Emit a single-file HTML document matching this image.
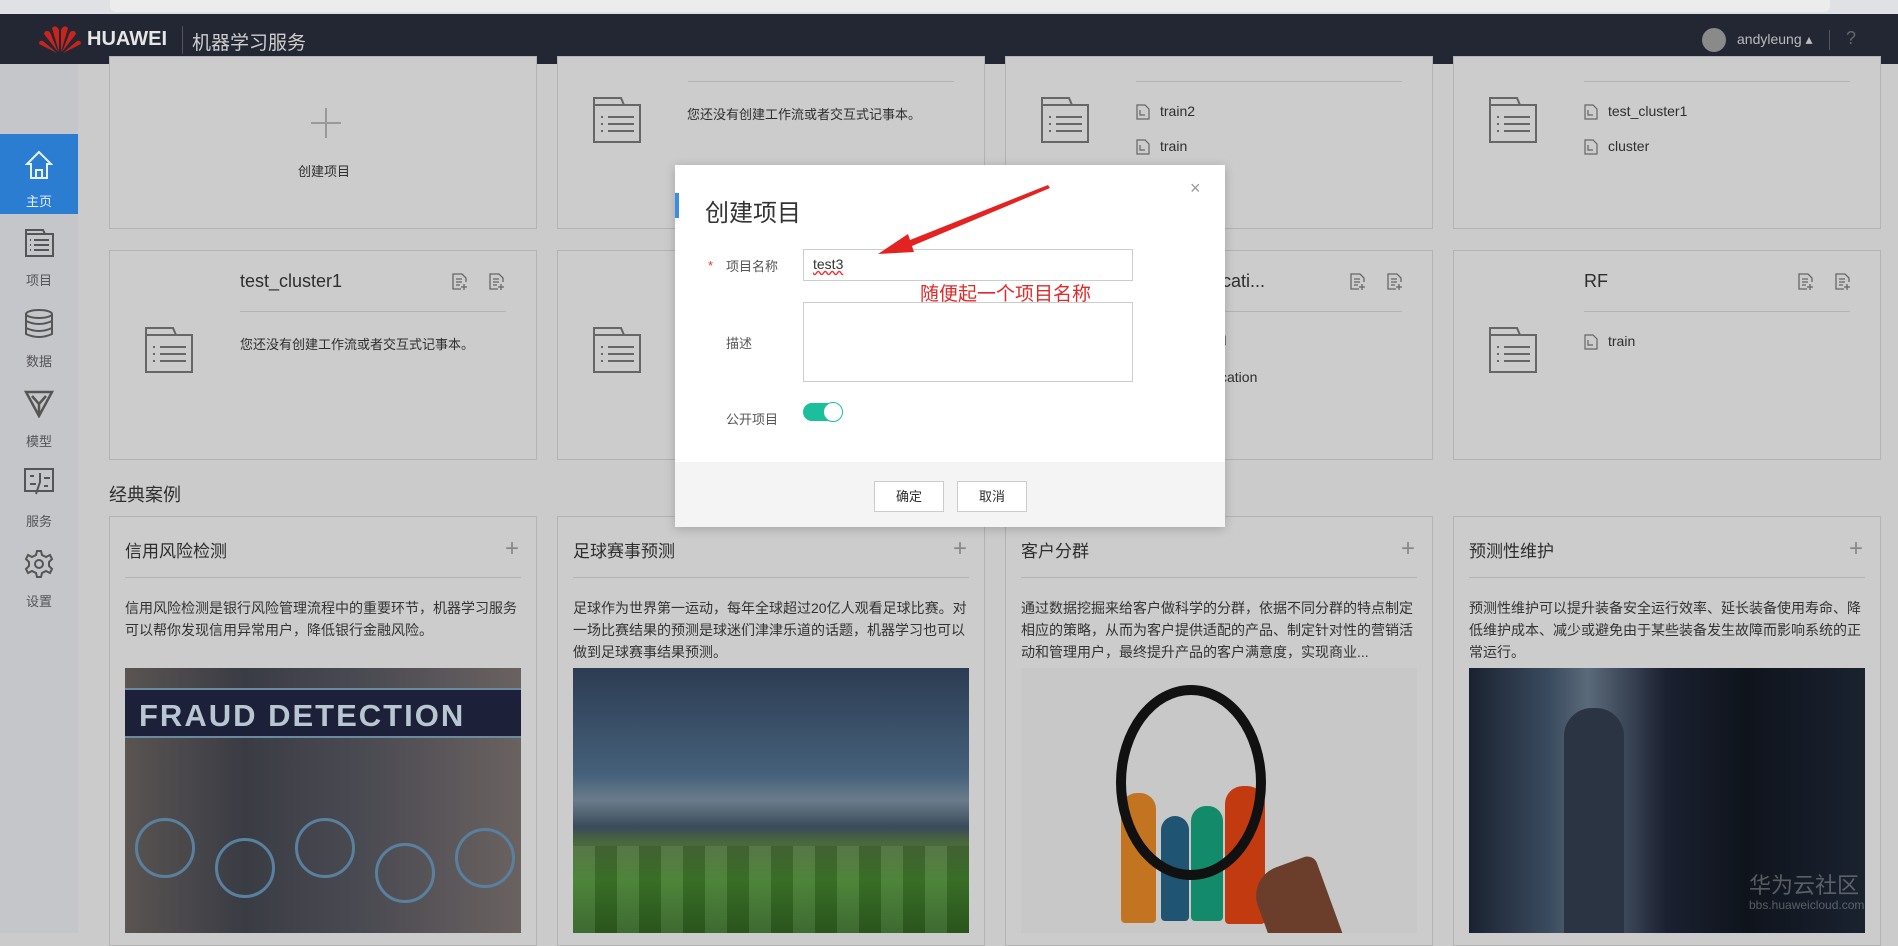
<!DOCTYPE html>
<html><head><meta charset="utf-8"><style>
*{margin:0;padding:0;box-sizing:border-box}
body{width:1898px;height:933px;overflow:hidden;position:relative;background:#cbcbcb;font-family:"Liberation Sans","Noto Sans CJK SC",sans-serif;color:#2e2e2e}
.abs{position:absolute}
.card{position:absolute;background:#cccccc;border:1px solid #b3b3b3}
.ln{position:absolute;height:1px;background:#b3b3b3}
.t{position:absolute;white-space:nowrap}
.side{position:absolute;left:0;top:64px;width:78px;height:869px;background:#c5c6ca}
.si{position:absolute;left:0;width:78px;text-align:center;font-size:13px;color:#555}
.desc{position:absolute;width:400px;font-size:14px;line-height:22px;color:#333}
</style></head><body>
<div class="abs" style="left:0;top:0;width:1898px;height:14px;background:#dfe1e4"></div>
<div class="abs" style="left:110px;top:0;width:1720px;height:12px;background:#ececec;border-radius:0 0 6px 6px"></div>
<div class="abs" style="left:0;top:14px;width:1898px;height:50px;background:#232633"></div>
<svg class="abs" style="left:38px;top:24px" width="44" height="30" viewBox="0 0 44 30">
<g fill="#c8241c"><path d="M21 28 L14 4 Q18 0 21 6Z"/><path d="M23 28 L30 4 Q26 0 23 6Z"/><path d="M20 28 L6 10 Q7 5 12 8Z"/><path d="M24 28 L38 10 Q37 5 32 8Z"/><path d="M19 29 L1 20 Q1 16 5 17Z"/><path d="M25 29 L43 20 Q43 16 39 17Z"/></g></svg>
<div class="t" style="left:87px;top:28px;font-size:20px;font-weight:bold;color:#e6e6e6">HUAWEI</div>
<div class="abs" style="left:182px;top:26px;width:1px;height:28px;background:#555"></div>
<div class="t" style="left:192px;top:28px;font-size:19px;color:#cfcfcf">机器学习服务</div>
<div class="abs" style="left:1702px;top:28px;width:24px;height:24px;border-radius:50%;background:#8a8a8a"></div>
<div class="t" style="left:1737px;top:31px;font-size:14px;color:#bbb">andyleung ▴</div>
<div class="abs" style="left:1829px;top:30px;width:1px;height:20px;background:#555"></div>
<div class="t" style="left:1846px;top:28px;font-size:18px;color:#666">?</div>
<div class="side"></div>
<div class="abs" style="left:0;top:134px;width:78px;height:80px;background:#2a7dd0"></div>
<svg class="abs" style="left:25px;top:150px" width="28" height="30" viewBox="0 0 28 30" fill="none" stroke="#e8f0fa" stroke-width="2"><path d="M14 2 L2 14 H6 V28 H22 V14 H26Z"/><path d="M11 28 V20 H17 V28"/></svg>
<div class="si" style="top:191px;color:#e8f0fa">主页</div>
<svg class="abs" style="left:25px;top:229px" width="29" height="28" viewBox="0 0 29 28" fill="none" stroke="#555" stroke-width="2"><path d="M1 1 H18 L20 5 H28 V27 H1Z M1 5 H20"/><path d="M9 11H24M9 16H24M9 21H24M5 11H6M5 16H6M5 21H6"/></svg>
<div class="si" style="top:270px">项目</div>
<svg class="abs" style="left:24px;top:309px" width="30" height="30" viewBox="0 0 30 30" fill="none" stroke="#555" stroke-width="2"><ellipse cx="15" cy="5" rx="13" ry="4"/><path d="M2 5V25Q15 31 28 25V5M2 12Q15 18 28 12M2 19Q15 25 28 19"/></svg>
<div class="si" style="top:351px">数据</div>
<svg class="abs" style="left:24px;top:390px" width="30" height="28" viewBox="0 0 30 28" fill="none" stroke="#555" stroke-width="2.5"><path d="M2 2H28L15 26Z M15 26 V14 M8 6 L15 14 L22 6"/></svg>
<div class="si" style="top:431px">模型</div>
<svg class="abs" style="left:24px;top:468px" width="30" height="28" viewBox="0 0 30 28" fill="none" stroke="#555" stroke-width="2"><rect x="1" y="1" width="28" height="22"/><path d="M6 8H10M6 16H12M16 5V14L12 26M20 10H26M20 18H24"/></svg>
<div class="si" style="top:511px">服务</div>
<svg class="abs" style="left:24px;top:549px" width="30" height="30" viewBox="0 0 30 30" fill="none" stroke="#555" stroke-width="2"><circle cx="15" cy="15" r="4"/><path d="M13 2H17L18 6L22 8L26 6L28 10L25 13V17L28 20L26 24L22 22L18 24L17 28H13L12 24L8 22L4 24L2 20L5 17V13L2 10L4 6L8 8L12 6Z"/></svg>
<div class="si" style="top:591px">设置</div>

<div class="card" style="left:109px;top:56px;width:428px;height:173px"></div>
<div class="abs" style="left:311px;top:108px;width:30px;height:30px"><div class="abs" style="left:14px;top:0;width:2px;height:30px;background:#9a9a9a"></div><div class="abs" style="left:0;top:14px;width:30px;height:2px;background:#9a9a9a"></div></div>
<div class="t" style="left:298px;top:161px;font-size:13px">创建项目</div>
<div class="card" style="left:557px;top:56px;width:428px;height:173px"></div>
<div class="card" style="left:1005px;top:56px;width:428px;height:173px"></div>
<div class="card" style="left:1453px;top:56px;width:428px;height:173px"></div>

<div class="card" style="left:109px;top:250px;width:428px;height:210px"></div>
<div class="card" style="left:557px;top:250px;width:428px;height:210px"></div>
<div class="card" style="left:1005px;top:250px;width:428px;height:210px"></div>
<div class="card" style="left:1453px;top:250px;width:428px;height:210px"></div>

<svg width="0" height="0" style="position:absolute"><defs>
<symbol id="fold" viewBox="0 0 48 46"><g fill="none" stroke="#666" stroke-width="2"><path d="M1 1H28L31 8H47V45H1Z M1 8H31"/><path d="M15 20H41M15 27H41M15 34H41"/><path d="M8 20H10M8 27H10M8 34H10"/></g></symbol>
<symbol id="fi" viewBox="0 0 14 16"><g fill="none" stroke="#666" stroke-width="1.2"><path d="M1 1H9L13 5V15H1Z"/><path d="M4 6V11H9"/></g></symbol>
<symbol id="adds" viewBox="0 0 16 18"><g fill="none" stroke="#666" stroke-width="1.3"><path d="M9 16H1V1H10L14 5V9"/><path d="M4 6H10M4 9H10M4 12H8M12 11V17M9 14H15"/></g></symbol>
</defs></svg>

<div class="ln" style="left:688px;top:81px;width:266px"></div>
<svg class="abs" style="left:593px;top:97px" width="48" height="46"><use href="#fold"/></svg>
<div class="t" style="left:687px;top:104px;font-size:13px">您还没有创建工作流或者交互式记事本。</div>
<div class="ln" style="left:1136px;top:81px;width:266px"></div>
<svg class="abs" style="left:1041px;top:97px" width="48" height="46"><use href="#fold"/></svg>
<svg class="abs" style="left:1136px;top:104px" width="14" height="16"><use href="#fi"/></svg>
<div class="t" style="left:1160px;top:103px;font-size:14px">train2</div>
<svg class="abs" style="left:1136px;top:139px" width="14" height="16"><use href="#fi"/></svg>
<div class="t" style="left:1160px;top:138px;font-size:14px">train</div>
<div class="ln" style="left:1584px;top:81px;width:266px"></div>
<svg class="abs" style="left:1489px;top:97px" width="48" height="46"><use href="#fold"/></svg>
<svg class="abs" style="left:1584px;top:104px" width="14" height="16"><use href="#fi"/></svg>
<div class="t" style="left:1608px;top:103px;font-size:14px">test_cluster1</div>
<svg class="abs" style="left:1584px;top:139px" width="14" height="16"><use href="#fi"/></svg>
<div class="t" style="left:1608px;top:138px;font-size:14px">cluster</div>

<div class="t" style="left:240px;top:271px;font-size:18px">test_cluster1</div>
<svg class="abs" style="left:452px;top:273px" width="16" height="18"><use href="#adds"/></svg>
<svg class="abs" style="left:489px;top:273px" width="16" height="18"><use href="#adds"/></svg>
<div class="ln" style="left:240px;top:311px;width:266px"></div>
<svg class="abs" style="left:145px;top:327px" width="48" height="46"><use href="#fold"/></svg>
<div class="t" style="left:240px;top:334px;font-size:13px">您还没有创建工作流或者交互式记事本。</div>
<svg class="abs" style="left:593px;top:327px" width="48" height="46"><use href="#fold"/></svg>
<div class="t" style="left:1213px;top:271px;font-size:18px">ficati...</div>
<svg class="abs" style="left:1350px;top:273px" width="16" height="18"><use href="#adds"/></svg>
<svg class="abs" style="left:1387px;top:273px" width="16" height="18"><use href="#adds"/></svg>
<div class="ln" style="left:1136px;top:311px;width:266px"></div>
<div class="t" style="left:1215px;top:332px;font-size:14px">M</div>
<div class="t" style="left:1213px;top:369px;font-size:14px">fication</div>
<div class="t" style="left:1584px;top:271px;font-size:18px">RF</div>
<svg class="abs" style="left:1798px;top:273px" width="16" height="18"><use href="#adds"/></svg>
<svg class="abs" style="left:1835px;top:273px" width="16" height="18"><use href="#adds"/></svg>
<div class="ln" style="left:1584px;top:311px;width:266px"></div>
<svg class="abs" style="left:1489px;top:327px" width="48" height="46"><use href="#fold"/></svg>
<svg class="abs" style="left:1584px;top:334px" width="14" height="16"><use href="#fi"/></svg>
<div class="t" style="left:1608px;top:333px;font-size:14px">train</div>

<div class="t" style="left:109px;top:481px;font-size:18px">经典案例</div>

<div class="card" style="left:109px;top:516px;width:428px;height:430px"></div>
<div class="card" style="left:557px;top:516px;width:428px;height:430px"></div>
<div class="card" style="left:1005px;top:516px;width:428px;height:430px"></div>
<div class="card" style="left:1453px;top:516px;width:428px;height:430px"></div>

<div class="t" style="left:125px;top:537px;font-size:17px">信用风险检测</div>
<div class="t" style="left:505px;top:535px;font-size:24px;color:#888">+</div>
<div class="ln" style="left:125px;top:577px;width:396px"></div>
<div class="desc" style="left:125px;top:597px">信用风险检测是银行风险管理流程中的重要环节，机器学习服务可以帮你发现信用异常用户，降低银行金融风险。</div>

<div class="t" style="left:573px;top:537px;font-size:17px">足球赛事预测</div>
<div class="t" style="left:953px;top:535px;font-size:24px;color:#888">+</div>
<div class="ln" style="left:573px;top:577px;width:396px"></div>
<div class="desc" style="left:573px;top:597px">足球作为世界第一运动，每年全球超过20亿人观看足球比赛。对一场比赛结果的预测是球迷们津津乐道的话题，机器学习也可以做到足球赛事结果预测。</div>

<div class="t" style="left:1021px;top:537px;font-size:17px">客户分群</div>
<div class="t" style="left:1401px;top:535px;font-size:24px;color:#888">+</div>
<div class="ln" style="left:1021px;top:577px;width:396px"></div>
<div class="desc" style="left:1021px;top:597px">通过数据挖掘来给客户做科学的分群，依据不同分群的特点制定相应的策略，从而为客户提供适配的产品、制定针对性的营销活动和管理用户，最终提升产品的客户满意度，实现商业...</div>

<div class="t" style="left:1469px;top:537px;font-size:17px">预测性维护</div>
<div class="t" style="left:1849px;top:535px;font-size:24px;color:#888">+</div>
<div class="ln" style="left:1469px;top:577px;width:396px"></div>
<div class="desc" style="left:1469px;top:597px">预测性维护可以提升装备安全运行效率、延长装备使用寿命、降低维护成本、减少或避免由于某些装备发生故障而影响系统的正常运行。</div>

<div class="abs" style="left:125px;top:668px;width:396px;height:265px;background:linear-gradient(90deg,#5a5452,#3a3c44 30%,#4a4a52 60%,#6a6260);overflow:hidden">
 <div class="abs" style="left:0;top:20px;width:396px;height:50px;background:#1c2038;border-top:2px solid #6a8aa0;border-bottom:2px solid #6a8aa0"></div>
 <div class="t" style="left:14px;top:30px;font-size:31px;font-weight:bold;color:#b8c6d2;letter-spacing:2px">FRAUD DETECTION</div>
 <div class="abs" style="left:10px;top:150px;width:60px;height:60px;border-radius:50%;border:3px solid #5a80a0"></div>
 <div class="abs" style="left:90px;top:170px;width:60px;height:60px;border-radius:50%;border:3px solid #5a80a0"></div>
 <div class="abs" style="left:170px;top:150px;width:60px;height:60px;border-radius:50%;border:3px solid #5a80a0"></div>
 <div class="abs" style="left:250px;top:175px;width:60px;height:60px;border-radius:50%;border:3px solid #5a80a0"></div>
 <div class="abs" style="left:330px;top:160px;width:60px;height:60px;border-radius:50%;border:3px solid #5a80a0"></div>
</div>
<div class="abs" style="left:573px;top:668px;width:396px;height:265px;background:linear-gradient(180deg,#2c3c52 0%,#45607a 40%,#6a7c8a 50%,#3a4a5a 60%,#4a6a3a 66%,#3f7a2a 80%,#2e5e20 100%)">
 <div class="abs" style="left:0;top:178px;width:396px;height:87px;background:repeating-linear-gradient(90deg,rgba(255,255,255,.08) 0 22px,rgba(0,0,0,.1) 22px 44px)"></div>
</div>
<div class="abs" style="left:1021px;top:668px;width:396px;height:265px;background:#c8c8c8;overflow:hidden">
 <div class="abs" style="left:100px;top:125px;width:35px;height:130px;background:#c27420;border-radius:16px 16px 4px 4px"></div>
 <div class="abs" style="left:140px;top:148px;width:28px;height:105px;background:#1f5472;border-radius:14px 14px 4px 4px"></div>
 <div class="abs" style="left:170px;top:138px;width:32px;height:115px;background:#138a6a;border-radius:15px 15px 4px 4px"></div>
 <div class="abs" style="left:204px;top:118px;width:40px;height:138px;background:#c23a10;border-radius:18px 18px 4px 4px"></div>
 <div class="abs" style="left:95px;top:17px;width:150px;height:195px;border-radius:50%;border:10px solid #111"></div>
 <div class="abs" style="left:240px;top:195px;width:70px;height:90px;background:#6a3e2a;border-radius:30px 10px 0 0;transform:rotate(-20deg)"></div>
</div>
<div class="abs" style="left:1469px;top:668px;width:396px;height:265px;background:linear-gradient(90deg,#1a2230,#3a4a5e 20%,#5a6a7a 30%,#1a2030 50%,#0f141c 70%,#1a2230)">
 <div class="abs" style="left:95px;top:40px;width:60px;height:225px;background:#2a3442;border-radius:28px 28px 0 0"></div>
 <div class="t" style="left:280px;top:200px;font-size:22px;color:rgba(220,220,220,.35)">华为云社区</div>
 <div class="t" style="left:280px;top:230px;font-size:12px;color:rgba(220,220,220,.35)">bbs.huaweicloud.com</div>
</div>

<div class="abs" style="left:675px;top:165px;width:550px;height:362px;background:#fff;box-shadow:0 2px 10px rgba(0,0,0,.2)"></div>
<div class="abs" style="left:675px;top:462px;width:550px;height:65px;background:#f4f4f4"></div>
<div class="abs" style="left:675px;top:193px;width:4px;height:25px;background:#3a8ee6"></div>
<div class="t" style="left:705px;top:193px;font-size:24px;color:#333">创建项目</div>
<div class="t" style="left:1190px;top:178px;font-size:18px;color:#999">×</div>
<div class="t" style="left:708px;top:258px;font-size:13px;color:#e33">*</div>
<div class="t" style="left:726px;top:256px;font-size:13px;color:#555">项目名称</div>
<div class="abs" style="left:803px;top:249px;width:330px;height:32px;border:1px solid #ccc"></div>
<div class="t" style="left:813px;top:256px;font-size:14px;color:#333;text-decoration:underline wavy #e33">test3</div>
<div class="t" style="left:920px;top:279px;font-size:19px;color:#e02a2a">随便起一个项目名称</div>
<div class="t" style="left:726px;top:333px;font-size:13px;color:#555">描述</div>
<div class="abs" style="left:803px;top:302px;width:330px;height:80px;border:1px solid #ccc"></div>
<div class="t" style="left:726px;top:409px;font-size:13px;color:#555">公开项目</div>
<div class="abs" style="left:803px;top:403px;width:38px;height:18px;border-radius:9px;background:#1bbf9c"></div>
<div class="abs" style="left:823px;top:402px;width:20px;height:20px;border-radius:50%;background:#fff;border:1px solid #1bbf9c"></div>
<div class="abs" style="left:874px;top:481px;width:70px;height:31px;border:1px solid #ccc;background:#fff;text-align:center;line-height:29px;font-size:13px">确定</div>
<div class="abs" style="left:957px;top:481px;width:70px;height:31px;border:1px solid #ccc;background:#fff;text-align:center;line-height:29px;font-size:13px">取消</div>
<svg class="abs" style="left:870px;top:180px" width="185" height="80" viewBox="0 0 185 80"><path d="M178 5 L40 60 L38 54 L8 74 L44 72 L42 66 L180 8Z" fill="#e52222"/></svg>
</body></html>
